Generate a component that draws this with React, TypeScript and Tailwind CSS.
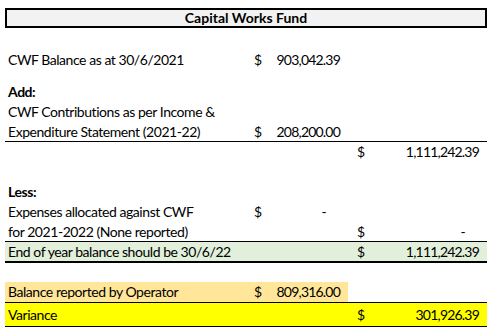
import React from "react";

const font = { fontFamily: "Lato, 'Open Sans', sans-serif" };

function Row({
  label,
  v1,
  v2,
  bold,
  className = "",
  labelClass = "",
}: {
  label?: string;
  v1?: string;
  v2?: string;
  bold?: boolean;
  className?: string;
  labelClass?: string;
}) {
  return (
    <div className={`grid grid-cols-[245px_98px_139px] items-center ${className}`}>
      <div className={`pl-[3px] whitespace-nowrap tracking-[-0.45px] ${bold ? "font-bold" : ""} ${labelClass}`}>{label}</div>
      <div className={`flex justify-between pl-[4px] pr-[8px] h-full items-center ${labelClass}`}>
        {v1 !== undefined ? (
          <>
            <span>$</span>
            <span className={`tracking-[-0.8px] ${v1 === "-" ? "pr-[14px]" : ""}`}>{v1}</span>
          </>
        ) : null}
      </div>
      <div className="flex justify-between pl-[9px] pr-[8px]">
        {v2 !== undefined ? (
          <>
            <span>$</span>
            <span className={`tracking-[-0.8px] ${v2 === "-" ? "pr-[14px]" : ""}`}>{v2}</span>
          </>
        ) : null}
      </div>
    </div>
  );
}

export default function App() {
  return (
    <div className="w-[492px] h-[333px] bg-white text-black text-[14px] leading-none overflow-hidden" style={font}>
      <div className="pt-[8px] pl-[5px] w-[487px]">
        <div className="h-[20px] border-2 border-black bg-[#f2f2f2] flex items-center justify-center font-bold">
          Capital Works Fund
        </div>
        <div className="h-[22px]" />
        <Row className="h-[20px]" label="CWF Balance as at 30/6/2021" v1="903,042.39" />
        <div className="h-[12px]" />
        <Row className="h-[20px]" label="Add:" bold />
        <Row className="h-[20px]" label="CWF Contributions as per Income &" />
        <Row className="h-[20px] border-b border-black" label="Expenditure Statement (2021-22)" v1="208,200.00" />
        <Row className="h-[20px]" v2="1,111,242.39" />
        <div className="h-[20px]" />
        <Row className="h-[20px]" label="Less:" bold />
        <Row className="h-[20px]" label="Expenses allocated against CWF" v1="-" />
        <Row className="h-[19px]" label="for 2021-2022 (None reported)" v2="-" />
        <Row
          className="h-[22px] border-t border-b-2 border-black bg-[#e2efda]"
          label="End of year balance should be 30/6/22"
          v2="1,111,242.39"
        />
        <div className="h-[19px]" />
        <Row
          className="h-[20px]"
          labelClass="bg-[#ffe699] h-full flex items-center"
          label="Balance reported by Operator"
          v1="809,316.00"
        />
        <Row
          className="h-[25px] border-y border-black bg-[#ffff00]"
          label="Variance"
          v2="301,926.39"
        />
      </div>
    </div>
  );
}
